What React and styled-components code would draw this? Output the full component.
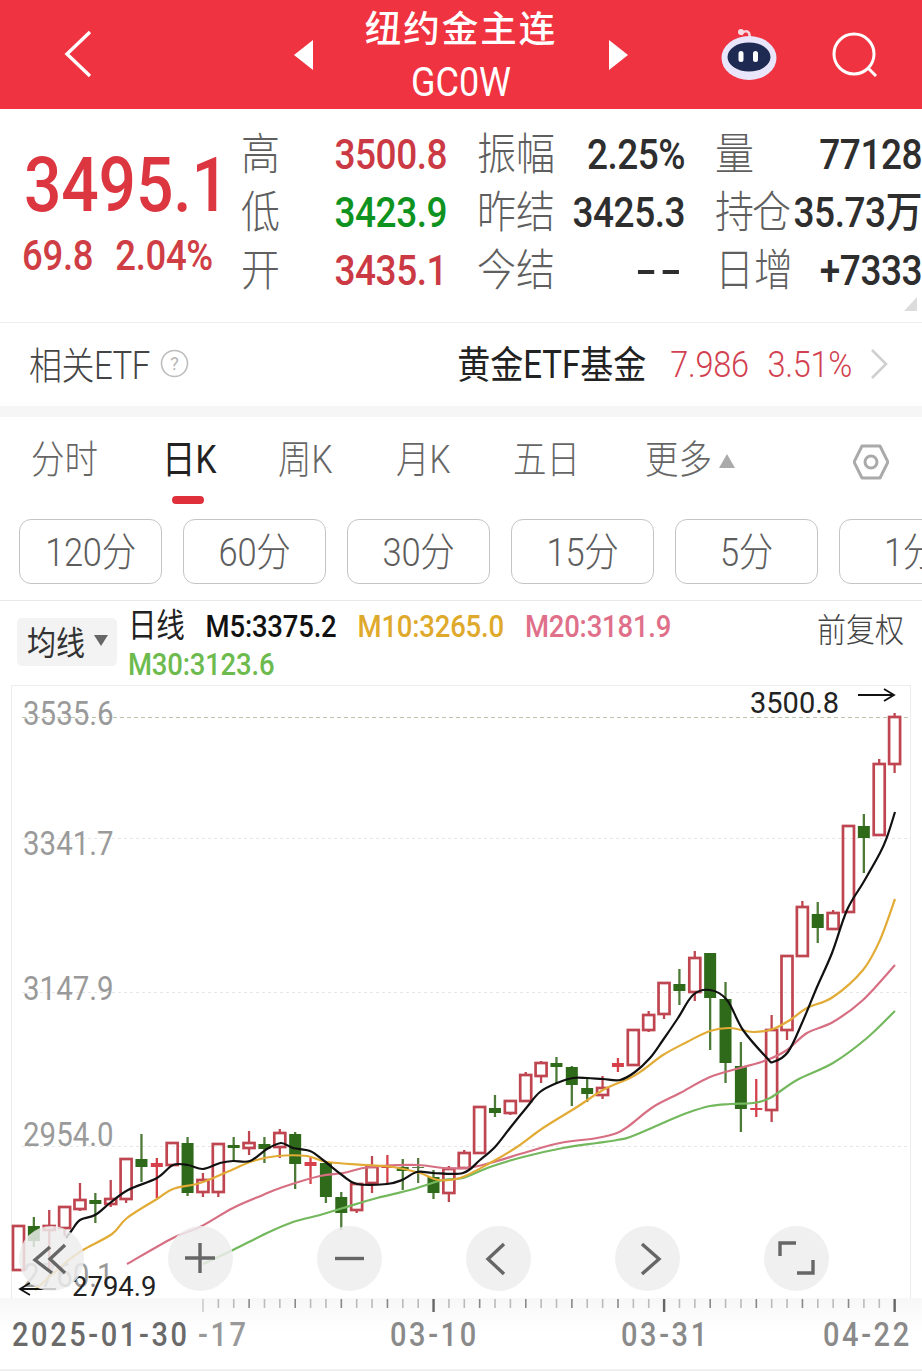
import React from 'react';
import styled, { createGlobalStyle, css } from 'styled-components';

const GlobalStyle = createGlobalStyle`
  html, body { margin: 0; padding: 0; background: #fff; }
  body { font-family: Roboto, "Noto Sans CJK SC", sans-serif; width: 922px; overflow-x: hidden; }
  * { box-sizing: border-box; }
`;

const CJK = `Roboto, "Noto Sans CJK SC", sans-serif`;
const tall = css`
  display: inline-block;
  transform: scaleY(1.15);
  white-space: nowrap;
`;

const Page = styled.div`
  width: 922px;
  height: 1371px;
  overflow: hidden;
  background: #fff;
  font-family: ${CJK};
`;

const Header = styled.header`
  height: 109px;
  background: #ef3340;
  display: grid;
  grid-template-columns: 294px 334px 1fr;
  align-items: center;
  color: #fff;
`;
const HeaderLeft = styled.div`
  padding-left: 62px;
  display: flex;
  align-items: center;
  height: 109px;
  padding-bottom: 2px;
`;
const HeaderCenter = styled.div`
  display: flex;
  align-items: center;
  justify-content: space-between;
  height: 109px;
`;
const TitleBlock = styled.div`
  align-self: flex-start;
  display: flex;
  flex-direction: column;
  align-items: center;
`;
const Title = styled.span`
  font-size: 36.5px;
  font-weight: 500;
  line-height: 40px;
  letter-spacing: 2px;
  margin-top: 10px;
  color: #fff;
  white-space: nowrap;
`;
const Symbol = styled.span`
  ${tall}
  font-size: 36px;
  line-height: 38px;
  margin-top: 13px;
`;
const HeaderRight = styled.div`
  display: flex;
  align-items: center;
  padding-left: 93px;
  gap: 55px;
  height: 109px;
`;

const Quote = styled.section`
  height: 214px;
  padding-top: 17px;
  display: flex;
  position: relative;
  border-bottom: 1px solid #eee;
`;
const QuoteMain = styled.div`
  width: 243px;
  padding: 30px 0 0 24px;
  display: flex;
  flex-direction: column;
`;
const BigPrice = styled.span`
  ${tall}
  font-size: 66px;
  font-weight: 500;
  line-height: 60px;
  color: #dc3640;
  letter-spacing: -0.2px;
`;
const ChangeRow = styled.div`
  margin: 20px 0 0 -2px;
  display: flex;
  gap: 22px;
  height: 40px;
  align-items: center;
`;
const ChangeValue = styled.span`
  ${tall}
  font-size: 36.5px;
  font-weight: 500;
  line-height: 40px;
  color: #cf3d45;
  letter-spacing: -0.3px;
`;
const QuoteGrid = styled.div`
  display: grid;
  grid-template-columns: 204px 206px 205px;
  grid-auto-rows: 58px;
  column-gap: 32px;
  align-items: center;
  white-space: nowrap;
`;
const Cell = styled.div`
  display: flex;
  justify-content: space-between;
  align-items: center;
  height: 58px;
`;
const CellLabel = styled.span`
  ${tall}
  font-size: 39px;
  font-weight: 300;
  line-height: 58px;
  color: #5f5f5f;
  margin-left: -2px;
  letter-spacing: ${p => (p.$tight ? '-2px' : '0')};
`;
const CellValue = styled.span`
  ${tall}
  font-size: 37px;
  font-weight: 500;
  line-height: 58px;
  letter-spacing: -0.5px;
  color: ${p => p.$color || '#2e2e2e'};
`;
const DashValue = styled(CellValue)`
  transform: scale(1.7, 1.15);
  transform-origin: right center;
  letter-spacing: 2px;
`;
const CornerMark = styled.svg`
  position: absolute;
  right: 5px;
  bottom: 11px;
`;

const EtfRow = styled.section`
  height: 83px;
  display: flex;
  align-items: center;
  justify-content: space-between;
  padding: 0 34px 0 29px;
`;
const EtfLeft = styled.div`
  display: flex;
  align-items: center;
  gap: 10px;
  margin-bottom: 2px;
`;
const EtfTitle = styled.span`
  ${tall}
  font-size: 33px;
  font-weight: 300;
  color: #444;
  letter-spacing: -0.5px;
  margin-bottom: 2px;
`;
const EtfRight = styled.div`
  display: flex;
  align-items: center;
  margin-bottom: 2px;
`;
const EtfName = styled.span`
  ${tall}
  font-size: 33px;
  font-weight: 400;
  color: #222;
  letter-spacing: 0;
  margin-right: 24px;
  margin-bottom: 3px;
`;
const EtfValue = styled.span`
  ${tall}
  font-size: 32.5px;
  font-weight: 300;
  color: #d24150;
  margin-right: ${p => p.$mr}px;
  letter-spacing: -0.3px;
`;
const Band = styled.div`
  height: 11px;
  background: #f6f6f6;
`;

const Tabs = styled.nav`
  height: 94px;
  display: flex;
  position: relative;
  padding: 11px 33px 0 31px;
  align-items: flex-start;
`;
const Tab = styled.span`
  ${tall}
  height: 64px;
  line-height: 64px;
  font-size: 33.5px;
  font-weight: ${p => (p.$active ? 400 : 300)};
  color: ${p => (p.$active ? '#222' : '#666')};
  width: ${p => p.$w}px;
`;
const MoreCaret = styled.i`
  display: block;
  width: 0;
  height: 0;
  margin: 26px 118px 0 9px;
  border-left: 8px solid transparent;
  border-right: 8px solid transparent;
  border-bottom: 14px solid #aaa;
`;
const TabIndicator = styled.div`
  position: absolute;
  left: 172px;
  top: 79px;
  width: 32px;
  height: 8px;
  border-radius: 4px;
  background: #de2f3b;
`;

const Pills = styled.div`
  height: 90px;
  padding: 8px 0 0 19px;
  display: flex;
  gap: 21px;
  overflow: hidden;
  border-bottom: 1px solid #e9e9e9;
`;
const Pill = styled.div`
  flex: none;
  width: 143px;
  height: 65px;
  border: 1px solid #c4c4c4;
  border-radius: 12px;
  display: flex;
  align-items: center;
  justify-content: center;
  overflow: hidden;
`;
const PillText = styled.span`
  ${tall}
  font-size: 34.5px;
  font-weight: 300;
  color: #5d5d5d;
  margin-bottom: 6px;
  letter-spacing: -0.3px;
`;

const Legend = styled.section`
  height: 84px;
  padding: 17px 18px 0 17px;
  display: flex;
  align-items: flex-start;
`;
const LegendButton = styled.div`
  width: 100px;
  height: 48px;
  border-radius: 5px;
  background: #f3f3f3;
  display: flex;
  align-items: center;
  padding: 0 0 5px 10px;
  margin-right: 11px;
`;
const LegendButtonText = styled.span`
  ${tall}
  font-size: 29px;
  font-weight: 400;
  color: #333;
`;
const LegendCaret = styled.i`
  display: block;
  margin-left: 9px;
  margin-top: 2px;
  width: 0;
  height: 0;
  border-left: 7px solid transparent;
  border-right: 7px solid transparent;
  border-top: 11px solid #666;
`;
const LegendBody = styled.div`
  flex: 1;
  display: flex;
  flex-direction: column;
  margin-top: -10px;
`;
const LegendLine = styled.div`
  display: flex;
  align-items: center;
  height: 38px;
`;
const LegendItem = styled.span`
  ${tall}
  font-size: ${p => (p.$cjk ? 28.5 : 27.5)}px;
  font-weight: ${p => (p.$cjk ? 400 : 500)};
  line-height: 38px;
  letter-spacing: -0.2px;
  color: ${p => p.$color};
  margin-right: 21px;
`;
const SecondLineItem = styled(LegendItem)`
  margin: 0;
`;
const LegendRight = styled.span`
  ${tall}
  margin-left: auto;
  font-size: 29px;
  font-weight: 300;
  color: #444;
`;

const ChartArea = styled.section`
  position: relative;
  height: 613px;
`;
const ChartSvg = styled.svg`
  display: block;
`;
const Controls = styled.div`
  position: absolute;
  left: 18.5px;
  top: 541px;
  display: flex;
  gap: 84px;
`;
const ControlButton = styled.div`
  width: 65px;
  height: 65px;
  border-radius: 50%;
  background: rgba(237, 237, 237, 0.84);
  svg { display: block; }
`;

const Axis = styled.section`
  height: 73px;
  background: linear-gradient(180deg, #f7f7f7 0, #fcfcfc 18px, #fff 36px);
  border-bottom: 2px solid #f0f0f0;
`;
const AxisSvg = styled.svg`
  display: block;
`;
const TabIcon = styled.svg`
  margin-top: 16px;
`;

const candles = [
  ['h',1226,1270],['g',1226,1241,1217,1247],['h',1226,1230,1210,1272],['h',1207,1228,1207,1236],
  ['h',1200,1209,1183,1211],['g',1200,1204,1193,1223],['h',1199,1204,1180,1207],['h',1159,1199,1159,1203],
  ['g',1159,1167,1134,1182],['r',1163,1167,1158,1198],['h',1143,1165],['g',1143,1193,1137,1196],
  ['h',1180,1192,1173,1197],['h',1144,1192,1144,1197],['g',1145,1148,1137,1162],['h',1143,1148,1131,1155],
  ['g',1144,1149,1137,1163],['h',1133,1147,1129,1158],['g',1134,1164,1132,1189],['r',1162,1166,1157,1184],
  ['g',1163,1197,1163,1203],['g',1197,1213,1192,1230],['h',1184,1210,1184,1213],['h',1167,1183,1156,1193],
  ['r',1165,1168,1155,1184],['g',1167,1171,1159,1190],['r',1167,1168,1158,1183,'#5a7a45'],['g',1177,1193,1170,1199],
  ['h',1169,1193,1166,1202],['h',1153,1168,1150,1168],['h',1107,1153],['g',1108,1113,1095,1117],
  ['h',1101,1113,1101,1115],['h',1075,1101,1072,1101],['h',1063,1076,1061,1083],['g',1063,1067,1057,1083],
  ['g',1067,1085,1066,1106],['g',1088,1094,1077,1102],['h',1088,1095,1076,1099],['r',1063,1067,1058,1072],
  ['h',1030,1065],['h',1015,1030,1011,1032],['h',983,1014,982,1019],['g',984,991,969,1005],
  ['h',958,992,951,1001],['g',953,998,953,1050],['g',999,1063,982,1083],['g',1066,1109,1042,1132],
  ['r',1108,1110,1079,1117],['h',1030,1110,1015,1122],['h',956,1030,956,1040],['h',907,956,901,956],
  ['g',914,928,902,943],['h',913,929,910,929],['h',826,912],['g',826,838,814,873],
  ['h',764,835,759,835],['h',717,764,713,773],
];

const M5 = [[66,1238],[72,1230],[80,1220],[95,1215],[110,1203],[128,1190],[157,1178],[173,1165],[188,1165],[203,1169],[220,1163],[233,1161],[250,1161],[267,1149],[281,1143],[293,1148],[310,1151],[323,1160],[342,1175],[357,1184],[387,1184],[402,1180],[417,1172],[433,1173],[463,1173],[480,1160],[495,1147],[510,1128],[527,1107],[540,1092],[557,1083],[573,1078],[587,1078],[603,1079],[620,1080],[635,1072],[650,1058],[663,1040],[678,1018],[693,995],[710,990],[727,1000],[743,1030],[767,1058],[773,1062],[788,1052],[802,1023],[817,987],[832,953],[847,910],[863,883],[880,853],[887,837],[895,812]];
const M10 = [[35,1290],[65,1263],[83,1250],[112,1234],[127,1218],[157,1199],[173,1189],[200,1183],[227,1172],[253,1161],[277,1156],[307,1156],[327,1162],[367,1165],[393,1167],[420,1173],[438,1180],[460,1178],[490,1163],[517,1147],[543,1128],[577,1107],[603,1090],[630,1078],[643,1070],[663,1055],[687,1042],[710,1031],[730,1028],[753,1032],[773,1029],[790,1020],[807,1008],[833,997],[863,970],[880,940],[895,899]];
const M20 = [[127,1264],[173,1238],[200,1227],[233,1208],[263,1195],[283,1187],[320,1176],[343,1173],[370,1167],[417,1165],[443,1168],[467,1168],[490,1163],[527,1152],[560,1143],[597,1138],[617,1133],[630,1125],[653,1107],[680,1093],[710,1077],[740,1068],[767,1060],[787,1050],[807,1033],[833,1022],[863,1000],[895,965]];
const M30 = [[203,1264],[233,1250],[267,1233],[293,1222],[320,1215],[343,1208],[377,1198],[410,1190],[443,1180],[463,1178],[490,1167],[523,1157],[563,1148],[597,1143],[617,1140],[630,1137],[663,1123],[687,1113],[710,1106],[730,1104],[753,1103],[770,1098],[797,1080],[833,1063],[867,1038],[895,1011]];

const smooth = pts => {
  let d = `M${pts[0][0]} ${pts[0][1]}`;
  for (let i = 0; i < pts.length - 1; i++) {
    const p0 = pts[i - 1] || pts[i], p1 = pts[i], p2 = pts[i + 1], p3 = pts[i + 2] || p2;
    const c1x = p1[0] + (p2[0] - p0[0]) / 6, c1y = p1[1] + (p2[1] - p0[1]) / 6;
    const c2x = p2[0] - (p3[0] - p1[0]) / 6, c2y = p2[1] - (p3[1] - p1[1]) / 6;
    d += ` C${c1x.toFixed(1)} ${c1y.toFixed(1)} ${c2x.toFixed(1)} ${c2y.toFixed(1)} ${p2[0]} ${p2[1]}`;
  }
  return d;
};

const HOLLOW = '#bf4650', GREEN = '#2f6a1a', WICKG = '#4e7a38', DOJI = '#d5404a';

const Candle = ({ i, c }) => {
  const [kind, top, bottom, hi = top, lo = bottom, override] = c;
  const x = 18.5 + 15.37 * i;
  const color = kind === 'h' ? HOLLOW : kind === 'g' ? GREEN : DOJI;
  const wick = override || (kind === 'g' ? WICKG : kind === 'h' ? HOLLOW : DOJI);
  return (
    <g>
      {hi < top && <line x1={x} x2={x} y1={hi} y2={top} stroke={wick} strokeWidth="2.3" />}
      {lo > bottom && <line x1={x} x2={x} y1={bottom} y2={lo} stroke={wick} strokeWidth="2.3" />}
      {kind === 'h' ? (
        <rect x={x - 5.5} y={top} width={11} height={bottom - top} fill="none" stroke={color} strokeWidth="2.7" />
      ) : (
        <rect x={x - 6} y={top} width={12} height={bottom - top} fill={override || color} />
      )}
    </g>
  );
};

const axisLabels = [
  ['3535.6', 725], ['3341.7', 855], ['3147.9', 1000], ['2954.0', 1146], ['2760.1', 1287],
];

const Chart = () => (
  <ChartSvg width="922" height="613" viewBox="0 685 922 613">
    <rect x="11.5" y="685.5" width="899" height="620" fill="none" stroke="#ececec" />
    <line x1="22" x2="911" y1="717.5" y2="717.5" stroke="#b9c4a8" strokeDasharray="4 3" />
    {[838.5, 992.5, 1146.5].map(y => (
      <line key={y} x1="22" x2="911" y1={y} y2={y} stroke="#e6e6e6" strokeDasharray="3 3" />
    ))}
    {axisLabels.map(([t, y]) => (
      <text key={t} transform={`translate(23 ${y}) scale(1 1.15)`} fontFamily="Roboto, sans-serif" fontSize="29.5" fill="#9a9a9a">{t}</text>
    ))}
    {candles.map((c, i) => <Candle key={i} i={i} c={c} />)}
    <path d={smooth(M30)} fill="none" stroke="#74b85e" strokeWidth="2.2" />
    <path d={smooth(M20)} fill="none" stroke="#d76f83" strokeWidth="2.2" />
    <path d={smooth(M10)} fill="none" stroke="#e2ab35" strokeWidth="2.2" />
    <path d={smooth(M5)} fill="none" stroke="#111" strokeWidth="2.2" />
    <text x="750" y="713" fontFamily="Roboto, sans-serif" fontSize="29" fill="#222">3500.8</text>
    <path d="M858 695H894M884 689l10 6-10 6" fill="none" stroke="#111" strokeWidth="1.8" />
    <text x="72" y="1296" fontFamily="Roboto, sans-serif" fontSize="27.5" fill="#222">2794.9</text>
    <path d="M56 1289H20M30 1283l-10 6 10 6" fill="none" stroke="#111" strokeWidth="1.8" />
  </ChartSvg>
);

const controlStroke = { fill: 'none', stroke: '#666', strokeWidth: 3.4, strokeLinecap: 'butt', strokeLinejoin: 'miter' };
const controls = [
  'M31 21L16 34L33 47M46 19L31 33L46 47',
  'M17 32H47M32 17V47',
  'M18 32.5H47',
  'M38 18L22 33L38 48',
  'M27 18L44 33L27 48',
  'M16 30V17H32M33 47H49V34',
];

const ticks = Array.from({ length: 46 }, (_, k) => 203 + 15.37 * k);

const AxisDrawing = () => (
  <AxisSvg width="922" height="71" viewBox="0 0 922 71">
    {ticks.map((x, k) => {
      const major = k % 15 === 0;
      const first = k === 0;
      return (
        <line
          key={k}
          x1={x} x2={x} y1="1"
          y2={major ? 14 : 10}
          stroke={first ? '#ccc' : major ? '#666' : k % 3 === 0 ? '#888' : '#bbb'}
          strokeWidth={major && !first ? 2.4 : 1.6}
        />
      );
    })}
    <g fontFamily="Roboto, sans-serif" fontSize="29" fontWeight="500" letterSpacing="2.6">
      <text transform="translate(12 48) scale(1 1.15)" fill="#6a6a6a">2025-01-30</text>
      <text transform="translate(198 48) scale(1 1.15)" fill="#999">-17</text>
      <text transform="translate(390 48) scale(1 1.15)" fill="#8a8a8a">03-10</text>
      <text transform="translate(621 48) scale(1 1.15)" fill="#8a8a8a">03-31</text>
      <text transform="translate(823 48) scale(1 1.15)" fill="#8a8a8a">04-22</text>
    </g>
  </AxisSvg>
);

const red = '#cb3a44';

export default function App() {
  return (
    <Page>
      <GlobalStyle />
      <Header>
        <HeaderLeft>
          <svg width="32" height="50" viewBox="0 0 32 50"><path d="M28 3L5 25L28 47" fill="none" stroke="#fff" strokeWidth="3.4" /></svg>
        </HeaderLeft>
        <HeaderCenter>
          <svg width="19" height="30" viewBox="0 0 19 30"><path d="M19 0V30L0 15Z" fill="#fff" /></svg>
          <TitleBlock>
            <Title>纽约金主连</Title>
            <Symbol>GC0W</Symbol>
          </TitleBlock>
          <svg width="19" height="30" viewBox="0 0 19 30"><path d="M0 0V30L19 15Z" fill="#fff" /></svg>
        </HeaderCenter>
        <HeaderRight>
          <svg width="56" height="54" viewBox="0 0 56 54">
            <path d="M20 7C22 3 26 2 28 5L29 9" fill="none" stroke="#f6d6dc" strokeWidth="2.5" />
            <circle cx="20" cy="4" r="3" fill="#f7dde2" />
            <ellipse cx="28" cy="30" rx="27.5" ry="22" fill="#e9e6fb" />
            <ellipse cx="28" cy="29" rx="21.5" ry="14.5" fill="#1f2a52" />
            <rect x="17.5" y="23" width="5" height="11" rx="2.5" fill="#fff" />
            <rect x="32" y="23" width="5" height="11" rx="2.5" fill="#fff" />
          </svg>
          <svg width="46" height="46" viewBox="0 0 46 46">
            <circle cx="22" cy="22" r="20" fill="none" stroke="#fff" strokeWidth="3" />
            <path d="M36 36L44 44" stroke="#fff" strokeWidth="3" />
          </svg>
        </HeaderRight>
      </Header>

      <Quote>
        <QuoteMain>
          <BigPrice>3495.1</BigPrice>
          <ChangeRow>
            <ChangeValue>69.8</ChangeValue>
            <ChangeValue>2.04%</ChangeValue>
          </ChangeRow>
        </QuoteMain>
        <QuoteGrid>
          <Cell><CellLabel>高</CellLabel><CellValue $color={red}>3500.8</CellValue></Cell>
          <Cell><CellLabel>振幅</CellLabel><CellValue>2.25%</CellValue></Cell>
          <Cell><CellLabel>量</CellLabel><CellValue>77128</CellValue></Cell>
          <Cell><CellLabel>低</CellLabel><CellValue $color="#0f9320">3423.9</CellValue></Cell>
          <Cell><CellLabel>昨结</CellLabel><CellValue>3425.3</CellValue></Cell>
          <Cell><CellLabel $tight>持仓</CellLabel><CellValue>35.73万</CellValue></Cell>
          <Cell><CellLabel>开</CellLabel><CellValue $color={red}>3435.1</CellValue></Cell>
          <Cell><CellLabel>今结</CellLabel><DashValue>--</DashValue></Cell>
          <Cell><CellLabel>日增</CellLabel><CellValue>+7333</CellValue></Cell>
        </QuoteGrid>
        <CornerMark width="13" height="14" viewBox="0 0 13 14"><path d="M13 0V14H0Z" fill="#dcdcdc" /></CornerMark>
      </Quote>

      <EtfRow>
        <EtfLeft>
          <EtfTitle>相关ETF</EtfTitle>
          <svg width="29" height="29" viewBox="0 0 29 29">
            <circle cx="14.5" cy="14.5" r="13" fill="none" stroke="#bdbdbd" strokeWidth="1.6" />
            <text x="14.5" y="21" textAnchor="middle" fontFamily="Roboto, sans-serif" fontSize="18" fill="#b5b5b5">?</text>
          </svg>
        </EtfLeft>
        <EtfRight>
          <EtfName>黄金ETF基金</EtfName>
          <EtfValue $mr={19}>7.986</EtfValue>
          <EtfValue $mr={18}>3.51%</EtfValue>
          <svg width="18" height="30" viewBox="0 0 18 30"><path d="M2 1L16 15L2 29" fill="none" stroke="#cfcfcf" strokeWidth="2.6" /></svg>
        </EtfRight>
      </EtfRow>
      <Band />

      <Tabs>
        <Tab $w={131}>分时</Tab>
        <Tab $w={116} $active>日K</Tab>
        <Tab $w={118}>周K</Tab>
        <Tab $w={117}>月K</Tab>
        <Tab $w={132}>五日</Tab>
        <Tab $w={65}>更多</Tab>
        <MoreCaret />
        <TabIcon width="36" height="36" viewBox="0 0 36 36">
          <path d="M9 2H27L35 18L27 34H9L1 18Z" fill="none" stroke="#aaa" strokeWidth="3" strokeLinejoin="round" />
          <circle cx="18" cy="18" r="6" fill="none" stroke="#aaa" strokeWidth="3" />
        </TabIcon>
        <TabIndicator />
      </Tabs>

      <Pills>
        <Pill><PillText>120分</PillText></Pill>
        <Pill><PillText>60分</PillText></Pill>
        <Pill><PillText>30分</PillText></Pill>
        <Pill><PillText>15分</PillText></Pill>
        <Pill><PillText>5分</PillText></Pill>
        <Pill><PillText>1分</PillText></Pill>
      </Pills>

      <Legend>
        <LegendButton>
          <LegendButtonText>均线</LegendButtonText>
          <LegendCaret />
        </LegendButton>
        <LegendBody>
          <LegendLine>
            <LegendItem $cjk $color="#222">日线</LegendItem>
            <LegendItem $color="#111">M5:3375.2</LegendItem>
            <LegendItem $color="#dfa92b">M10:3265.0</LegendItem>
            <LegendItem $color="#e0708a">M20:3181.9</LegendItem>
            <LegendRight>前复权</LegendRight>
          </LegendLine>
          <LegendLine>
            <SecondLineItem $color="#6dbb4f">M30:3123.6</SecondLineItem>
          </LegendLine>
        </LegendBody>
      </Legend>

      <ChartArea>
        <Chart />
        <Controls>
          {controls.map(d => (
            <ControlButton key={d}>
              <svg width="65" height="65" viewBox="0 0 65 65"><path d={d} {...controlStroke} /></svg>
            </ControlButton>
          ))}
        </Controls>
      </ChartArea>
      <Axis><AxisDrawing /></Axis>
    </Page>
  );
}
